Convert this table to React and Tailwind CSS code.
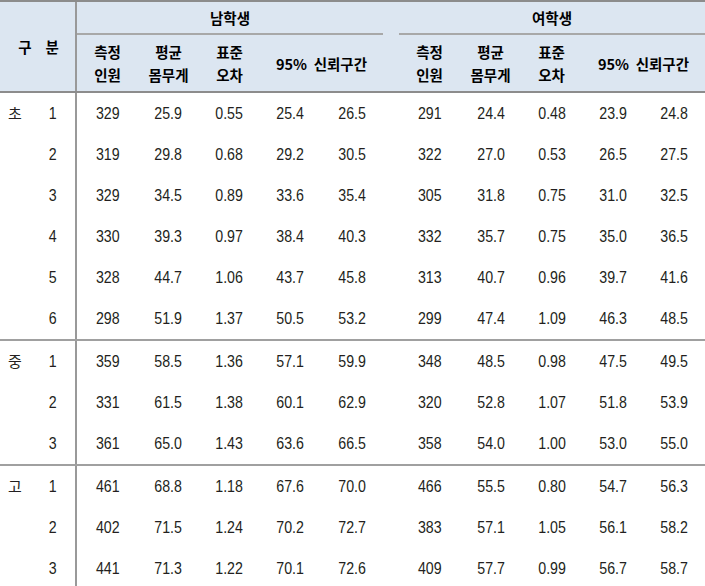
const boys = [
  ["초", "1", "329", "25.9", "0.55", "25.4", "26.5", "291", "24.4", "0.48", "23.9", "24.8"],
  ["", "2", "319", "29.8", "0.68", "29.2", "30.5", "322", "27.0", "0.53", "26.5", "27.5"],
  ["", "3", "329", "34.5", "0.89", "33.6", "35.4", "305", "31.8", "0.75", "31.0", "32.5"],
  ["", "4", "330", "39.3", "0.97", "38.4", "40.3", "332", "35.7", "0.75", "35.0", "36.5"],
  ["", "5", "328", "44.7", "1.06", "43.7", "45.8", "313", "40.7", "0.96", "39.7", "41.6"],
  ["", "6", "298", "51.9", "1.37", "50.5", "53.2", "299", "47.4", "1.09", "46.3", "48.5"],
];

const middle = [
  ["중", "1", "359", "58.5", "1.36", "57.1", "59.9", "348", "48.5", "0.98", "47.5", "49.5"],
  ["", "2", "331", "61.5", "1.38", "60.1", "62.9", "320", "52.8", "1.07", "51.8", "53.9"],
  ["", "3", "361", "65.0", "1.43", "63.6", "66.5", "358", "54.0", "1.00", "53.0", "55.0"],
];

const high = [
  ["고", "1", "461", "68.8", "1.18", "67.6", "70.0", "466", "55.5", "0.80", "54.7", "56.3"],
  ["", "2", "402", "71.5", "1.24", "70.2", "72.7", "383", "57.1", "1.05", "56.1", "58.2"],
  ["", "3", "441", "71.3", "1.22", "70.1", "72.6", "409", "57.7", "0.99", "56.7", "58.7"],
];

const sections = [boys, middle, high];

const widths = ["w-[61px]", "w-[61px]", "w-[61px]", "w-[61px]", "w-[62px]"];
const widthsW = ["w-[61px]", "w-[62px]", "w-[61px]", "w-[61px]", "w-[61px]"];

function SubHeader() {
  return (
    <div className="flex flex-1 items-center text-center leading-[23px]">
      <div className="w-[61px]">측정<br />인원</div>
      <div className="w-[61px]">평균<br />몸무게</div>
      <div className="w-[61px]">표준<br />오차</div>
      <div className="w-[123px]">95%&nbsp; 신뢰구간</div>
    </div>
  );
}

// narrow digits like the printed table
function Num({ children }) {
  return <span className="inline-block scale-x-[0.86]">{children}</span>;
}

function Row({ row }) {
  return (
    <div className="flex h-[41px] items-center">
      <div className="w-[30px] text-center font-['Noto_Sans_CJK_KR',sans-serif] text-[15px]">
        {row[0]}
      </div>
      <div className="flex h-full w-[47px] items-center justify-center border-r-2 border-[#999]">
        <Num>{row[1]}</Num>
      </div>
      {row.slice(2, 7).map((v, i) => (
        <div key={i} className={`${widths[i]} text-center`}>
          <Num>{v}</Num>
        </div>
      ))}
      <div className="w-[16px]" />
      {row.slice(7).map((v, i) => (
        <div key={i} className={`${widthsW[i]} text-center`}>
          <Num>{v}</Num>
        </div>
      ))}
    </div>
  );
}

export default function App() {
  return (
    <div className="h-[586px] w-[705px] overflow-hidden bg-white font-['Liberation_Sans','Noto_Sans_CJK_KR',sans-serif] text-[16.5px] text-[#231f20]">
      {/* HEADER */}
      <div className="flex h-[93px] border-y-2 border-t-[#8c8c8c] border-b-[#8c8c8c] bg-[#dce6f1] font-['Noto_Sans_CJK_KR',sans-serif] text-[14.5px] font-bold text-black">
        <div className="flex w-[77px] items-center justify-center gap-[14px] border-r-2 border-[#999] pl-[2px]">
          <span>구</span>
          <span>분</span>
        </div>
        <div className="flex w-[306px] flex-col">
          <div className="flex h-[33px] items-center justify-center border-b-2 border-[#a8a8a8]">
            남학생
          </div>
          <SubHeader />
        </div>
        <div className="w-[16px]" />
        <div className="flex w-[306px] flex-col">
          <div className="flex h-[33px] items-center justify-center border-b-2 border-[#a8a8a8]">
            여학생
          </div>
          <SubHeader />
        </div>
      </div>

      {/* BODY */}
      {sections.map((rows, s) => (
        <div key={s} className={s > 0 ? "border-t-2 border-[#a0a0a0]" : ""}>
          {rows.map((row, r) => (
            <Row key={r} row={row} />
          ))}
        </div>
      ))}
    </div>
  );
}
